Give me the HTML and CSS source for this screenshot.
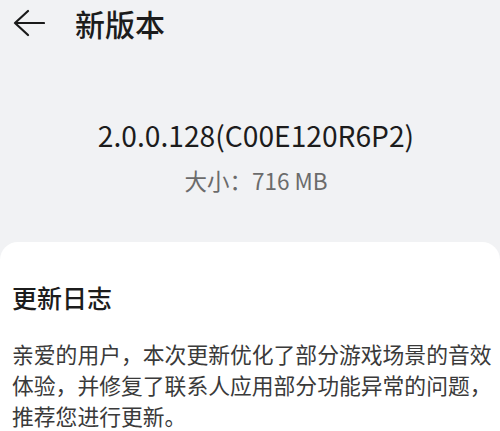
FILE: index.html
```html
<!DOCTYPE html>
<html lang="zh-CN">
<head>
<meta charset="utf-8">
<link rel="stylesheet" href="styles.css">
</head>
<body>
<div class="page">
  <header class="topbar">
    <svg class="back" width="32" height="28" viewBox="0 0 32 28" aria-hidden="true">
      <path d="M15 2 L2 14 L15 26 M2 14 L31 14" fill="none" stroke="#1a1a1a" stroke-width="2.2" stroke-linecap="round" stroke-linejoin="round"/>
    </svg>
    <h1 class="title">新版本</h1>
  </header>
  <section class="version">
    <div class="ver-num">2.0.0.128(C00E120R6P2)</div>
    <div class="ver-size">大小：716 MB</div>
  </section>
  <section class="card">
    <h2 class="log-title">更新日志</h2>
    <p class="log-text">亲爱的用户，本次更新优化了部分游戏场景的音效体验，并修复了联系人应用部分功能异常的问题，推荐您进行更新。</p>
  </section>
</div>
</body>
</html>
```
FILE: styles.css
```css
html, body {
  margin: 0;
  padding: 0;
  background: #f1f2f4;
  font-family: "Noto Sans CJK SC", "Noto Sans", sans-serif;
  color: #1c1c1c;
}
.page {
  width: 500px;
  height: 431px;
  overflow: hidden;
  display: flex;
  flex-direction: column;
}
.topbar {
  display: flex;
  align-items: center;
  height: 48px;
  padding-left: 13px;
}
.back {
  display: block;
}
.title {
  margin: 0 0 0 30px;
  font-size: 30px;
  font-weight: 500;
  line-height: 1;
}
.version {
  display: flex;
  flex-direction: column;
  align-items: center;
  padding: 70px 0 0 12px;
}
.ver-num {
  font-size: 28.2px;
  line-height: 40px;
  font-weight: 400;
  color: #1c1c1c;
}
.ver-size {
  font-size: 22.5px;
  line-height: 30px;
  margin-top: 10px;
  color: #6b6b6b;
}
.card {
  margin-top: 47px;
  flex: 1;
  background: #ffffff;
  border-radius: 18px 18px 0 0;
  padding: 40px 8px 0 12px;
}
.log-title {
  margin: 0;
  font-size: 25px;
  font-weight: 500;
  line-height: 30px;
}
.log-text {
  margin: 26px 0 0 0;
  font-size: 21.8px;
  line-height: 31px;
  color: #3a3a3a;
}
```
